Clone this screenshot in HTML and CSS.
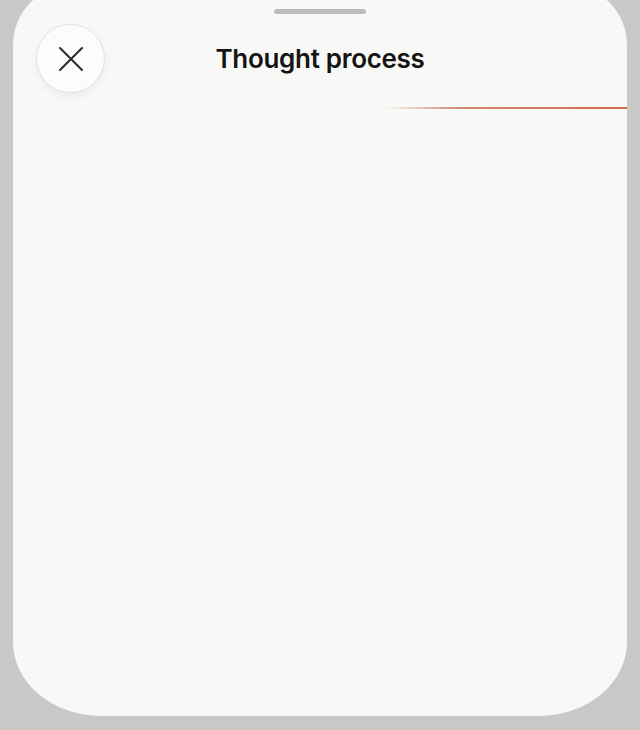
FILE: index.html
```html
<!DOCTYPE html>
<html lang="en">
<head>
  <meta charset="UTF-8" />
  <title>Thought process</title>
  <meta name="viewport" content="width=device-width, initial-scale=1.0">
  <link rel="stylesheet" href="styles.css">
</head>
<body>
  <div class="sheet">
    <div class="grabber"></div>

    <div class="sheet-header">
      <button class="close-btn" aria-label="Close">
        <svg width="26" height="26" viewBox="0 0 26 26">
          <path d="M2 2 L24 24 M24 2 L2 24" stroke="#2b2b2b" stroke-width="2" stroke-linecap="round" fill="none"/>
        </svg>
      </button>
      <h1 class="sheet-title">Thought process</h1>
      <div class="spacer"></div>
    </div>

    <div class="progress-line"></div>
  </div>
</body>
</html>
```

FILE: styles.css
```css
:root {
  --bg-color: #c8c8c6;
  --sheet-color: #f8f8f6;
  --text-color: #141413;
  --accent-color: #d9694e;
}

html, body {
  margin: 0;
  height: 100%;
}

body {
  background-color: var(--bg-color);
  font-family: Inter, "Open Sans", sans-serif;
  color: var(--text-color);
  overflow: hidden;
}

.sheet {
  box-sizing: border-box;
  margin: -15px 13px 0;
  height: 731px;
  padding-top: 24px;
  background: var(--sheet-color);
  border-radius: 60px 60px 88px 88px / 60px 60px 74px 74px;
  display: flex;
  flex-direction: column;
}

.grabber {
  align-self: center;
  width: 92px;
  height: 5px;
  border-radius: 3px;
  background: #bdbdbb;
}

.sheet-header {
  display: grid;
  grid-template-columns: 69px 1fr 69px;
  align-items: center;
  margin-top: 10px;
  padding: 0 23px;
}

.close-btn {
  width: 69px;
  height: 69px;
  padding: 0;
  border-radius: 50%;
  border: 1px solid #e2e2e0;
  background: #fcfcfb;
  box-shadow: 0 4px 10px rgba(0, 0, 0, 0.05);
  display: flex;
  align-items: center;
  justify-content: center;
  cursor: pointer;
}

.sheet-title {
  margin: 0;
  text-align: center;
  font-size: 26px;
  font-weight: 600;
  letter-spacing: -0.3px;
}

.progress-line {
  align-self: flex-end;
  margin-top: 14px;
  width: 242px;
  height: 1.5px;
  background: linear-gradient(to right, rgba(160, 150, 145, 0), #cf8a74 30%, var(--accent-color));
}
```
